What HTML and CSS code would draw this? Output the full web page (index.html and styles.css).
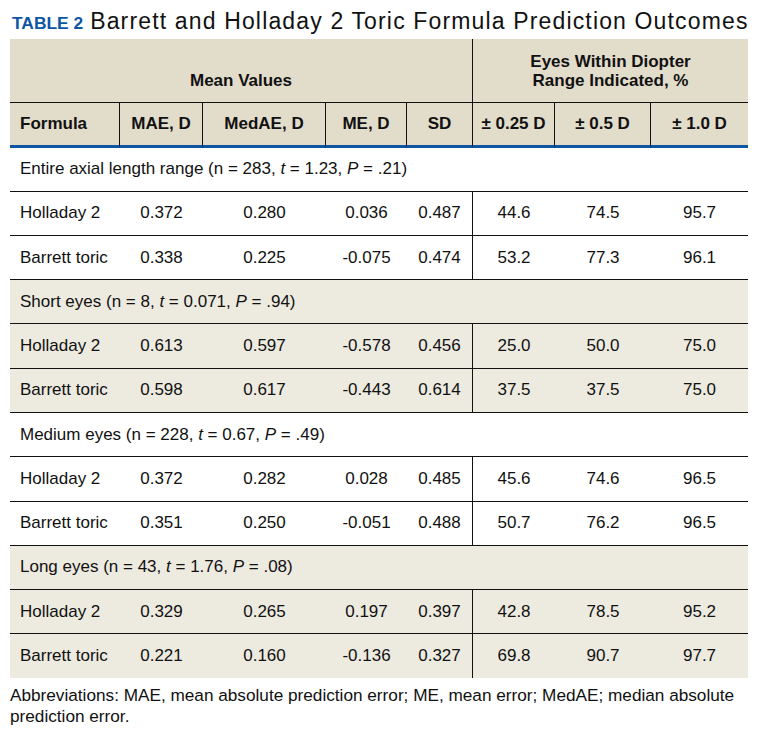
FILE: index.html
```html
<!DOCTYPE html>
<html lang="en">
<head>
<meta charset="utf-8">
<title>Table 2</title>
<link rel="stylesheet" href="styles.css">
</head>
<body>
<div class="page">
  <h1 class="title"><span class="label">TABLE 2</span><span class="caption">Barrett and Holladay 2 Toric Formula Prediction Outcomes</span></h1>
  <table class="data">
    <colgroup>
      <col class="c1"><col class="c2"><col class="c3"><col class="c4"><col class="c5"><col class="c6"><col class="c7"><col class="c8">
    </colgroup>
    <thead>
      <tr class="group">
        <th colspan="5" class="g-left">Mean Values</th>
        <th colspan="3" class="g-right">Eyes Within Diopter<br>Range Indicated, %</th>
      </tr>
      <tr class="cols">
        <th class="first">Formula</th>
        <th>MAE, D</th>
        <th>MedAE, D</th>
        <th>ME, D</th>
        <th class="split">SD</th>
        <th>± 0.25 D</th>
        <th>± 0.5 D</th>
        <th>± 1.0 D</th>
      </tr>
    </thead>
    <tbody>
      <tr class="section top"><td colspan="8">Entire axial length range (n = 283, <i>t</i> = 1.23, <i>P</i> = .21)</td></tr>
      <tr class="row"><td class="first">Holladay 2</td><td>0.372</td><td>0.280</td><td>0.036</td><td class="split">0.487</td><td>44.6</td><td>74.5</td><td>95.7</td></tr>
      <tr class="row"><td class="first">Barrett toric</td><td>0.338</td><td>0.225</td><td>-0.075</td><td class="split">0.474</td><td>53.2</td><td>77.3</td><td>96.1</td></tr>

      <tr class="section shade"><td colspan="8">Short eyes (n = 8, <i>t</i> = 0.071, <i>P</i> = .94)</td></tr>
      <tr class="row shade"><td class="first">Holladay 2</td><td>0.613</td><td>0.597</td><td>-0.578</td><td class="split">0.456</td><td>25.0</td><td>50.0</td><td>75.0</td></tr>
      <tr class="row shade"><td class="first">Barrett toric</td><td>0.598</td><td>0.617</td><td>-0.443</td><td class="split">0.614</td><td>37.5</td><td>37.5</td><td>75.0</td></tr>

      <tr class="section"><td colspan="8">Medium eyes (n = 228, <i>t</i> = 0.67, <i>P</i> = .49)</td></tr>
      <tr class="row"><td class="first">Holladay 2</td><td>0.372</td><td>0.282</td><td>0.028</td><td class="split">0.485</td><td>45.6</td><td>74.6</td><td>96.5</td></tr>
      <tr class="row"><td class="first">Barrett toric</td><td>0.351</td><td>0.250</td><td>-0.051</td><td class="split">0.488</td><td>50.7</td><td>76.2</td><td>96.5</td></tr>

      <tr class="section shade"><td colspan="8">Long eyes (n = 43, <i>t</i> = 1.76, <i>P</i> = .08)</td></tr>
      <tr class="row shade"><td class="first">Holladay 2</td><td>0.329</td><td>0.265</td><td>0.197</td><td class="split">0.397</td><td>42.8</td><td>78.5</td><td>95.2</td></tr>
      <tr class="row shade"><td class="first">Barrett toric</td><td>0.221</td><td>0.160</td><td>-0.136</td><td class="split">0.327</td><td>69.8</td><td>90.7</td><td>97.7</td></tr>
    </tbody>
  </table>
  <p class="note">Abbreviations: MAE, mean absolute prediction error; ME, mean error; MedAE; median absolute prediction error.</p>
</div>
</body>
</html>
```

FILE: styles.css
```css
html, body {
  margin: 0;
  padding: 0;
  background: #ffffff;
}

body {
  font-family: "Liberation Sans", Arial, sans-serif;
  color: #111111;
}

.page {
  width: 738px;
  padding: 0 10px;
}

.title {
  display: flex;
  align-items: baseline;
  gap: 7px;
  height: 30px;
  margin: 0 0 3px 0;
  padding: 6px 0 0 2px;
  font-weight: normal;
  white-space: nowrap;
}

.label {
  color: #0d56a3;
  font-weight: bold;
  font-size: 17.4px;
  line-height: 30px;
}

.caption {
  color: #111111;
  font-size: 23px;
  letter-spacing: 1.15px;
  line-height: 30px;
}

.data {
  width: 738px;
  table-layout: fixed;
  border-collapse: separate;
  border-spacing: 0;
  font-size: 17px;
}

.c1 { width: 110px; }
.c2 { width: 83px; }
.c3 { width: 123px; }
.c4 { width: 81px; }
.c5 { width: 66px; }
.c6 { width: 82px; }
.c7 { width: 96px; }
.c8 { width: 97px; }

th, td {
  padding: 0;
  text-align: center;
  white-space: nowrap;
}

thead th {
  background: #e2dccb;
  font-weight: bold;
}

.group th {
  vertical-align: bottom;
  line-height: 19px;
  padding: 13px 0 12px 0;
  height: 38px;
}

.group .g-left {
  border-right: 1px solid #111;
}

.cols th {
  border-top: 1px solid #111;
  border-bottom: 3px solid #0d56a3;
  border-right: 1px solid #111;
  line-height: 20px;
  padding: 11px 0;
}

.cols th:last-child {
  border-right: none;
}

.first {
  text-align: left;
  padding-left: 10px !important;
}

td {
  line-height: 20px;
  padding: 11.65px 0;
  border-top: 1px solid #111;
}

.section td {
  text-align: left;
  padding-left: 10px;
}

.section.top td {
  border-top: none;
  padding-top: 11.3px;
  padding-bottom: 11.3px;
}

.row .split {
  border-right: 1px solid #111;
}

.shade td {
  background: #edeae0;
}

.note {
  margin: 7px 0 0 0;
  font-size: 17.2px;
  line-height: 21px;
}
```
